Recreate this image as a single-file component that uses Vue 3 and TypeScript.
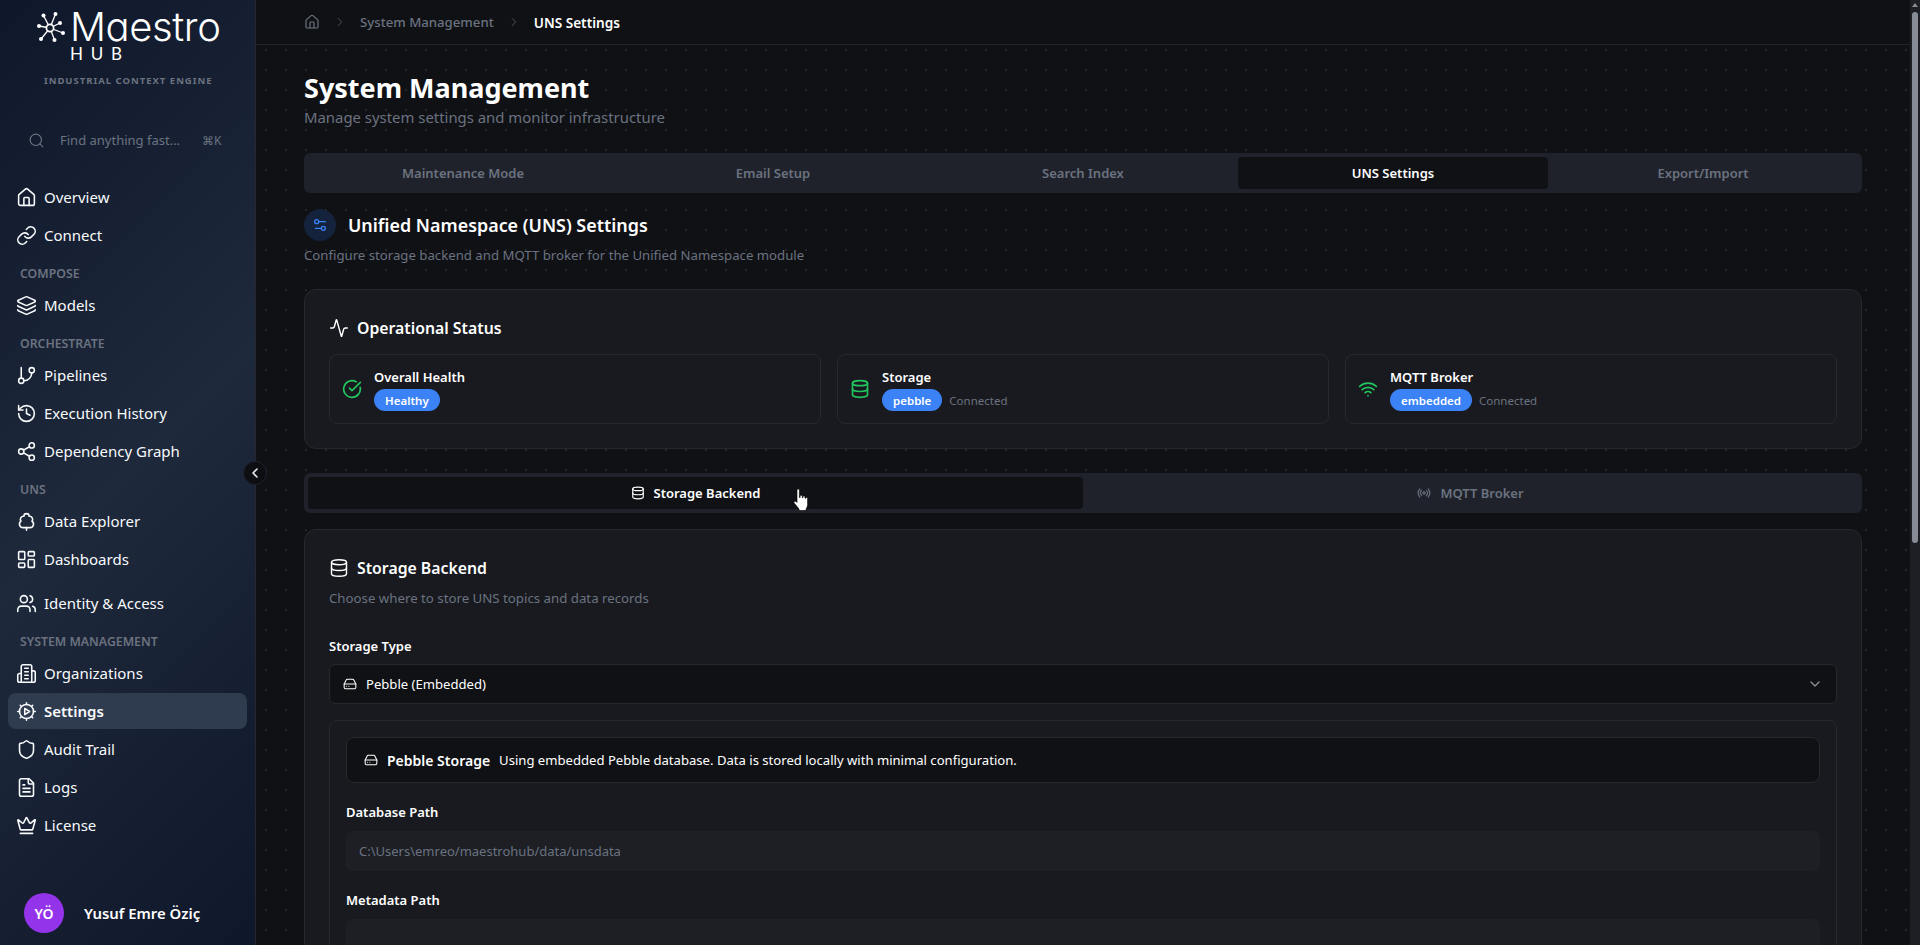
<script setup lang="ts">
interface NavItem {
  label?: string
  section?: string
  icon?: string
  active?: boolean
  spaced?: boolean
}

// lucide style icon bodies, keyed by name
const icons: Record<string, string> = {
  house:
    '<path d="M15 21v-8a1 1 0 0 0-1-1h-4a1 1 0 0 0-1 1v8"/><path d="M3 10a2 2 0 0 1 .709-1.528l7-5.999a2 2 0 0 1 2.582 0l7 5.999A2 2 0 0 1 21 10v9a2 2 0 0 1-2 2H5a2 2 0 0 1-2-2z"/>',
  link: '<path d="M10 13a5 5 0 0 0 7.54.54l3-3a5 5 0 0 0-7.07-7.07l-1.72 1.71"/><path d="M14 11a5 5 0 0 0-7.54-.54l-3 3a5 5 0 0 0 7.07 7.07l1.71-1.71"/>',
  layers:
    '<path d="M12.83 2.18a2 2 0 0 0-1.66 0L2.6 6.08a1 1 0 0 0 0 1.83l8.58 3.91a2 2 0 0 0 1.66 0l8.58-3.9a1 1 0 0 0 0-1.83z"/><path d="M2 12a1 1 0 0 0 .58.91l8.6 3.91a2 2 0 0 0 1.65 0l8.58-3.9A1 1 0 0 0 22 12"/><path d="M2 17a1 1 0 0 0 .58.91l8.6 3.91a2 2 0 0 0 1.65 0l8.58-3.9A1 1 0 0 0 22 17"/>',
  branch:
    '<line x1="6" x2="6" y1="3" y2="15"/><circle cx="18" cy="6" r="3"/><circle cx="6" cy="18" r="3"/><path d="M18 9a9 9 0 0 1-9 9"/>',
  history: '<path d="M3 12a9 9 0 1 0 9-9 9.75 9.75 0 0 0-6.74 2.74L3 8"/><path d="M3 3v5h5"/><path d="M12 7v5l4 2"/>',
  share:
    '<circle cx="18" cy="5" r="3"/><circle cx="6" cy="12" r="3"/><circle cx="18" cy="19" r="3"/><line x1="8.59" x2="15.42" y1="13.51" y2="17.49"/><line x1="15.41" x2="8.59" y1="6.51" y2="10.49"/>',
  tree: '<path d="M8 19a4 4 0 0 1-2.24-7.32A3.5 3.5 0 0 1 9 6.03V6a3 3 0 1 1 6 0v.04a3.5 3.5 0 0 1 3.24 5.65A4 4 0 0 1 16 19Z"/><path d="M12 19v3"/>',
  dashboard:
    '<rect width="7" height="9" x="3" y="3" rx="1"/><rect width="7" height="5" x="14" y="3" rx="1"/><rect width="7" height="9" x="14" y="12" rx="1"/><rect width="7" height="5" x="3" y="16" rx="1"/>',
  users:
    '<path d="M16 21v-2a4 4 0 0 0-4-4H6a4 4 0 0 0-4 4v2"/><path d="M16 3.128a4 4 0 0 1 0 7.744"/><path d="M22 21v-2a4 4 0 0 0-3-3.87"/><circle cx="9" cy="7" r="4"/>',
  building:
    '<path d="M6 22V4a2 2 0 0 1 2-2h8a2 2 0 0 1 2 2v18Z"/><path d="M6 12H4a2 2 0 0 0-2 2v6a2 2 0 0 0 2 2h2"/><path d="M18 9h2a2 2 0 0 1 2 2v9a2 2 0 0 1-2 2h-2"/><path d="M10 6h4"/><path d="M10 10h4"/><path d="M10 14h4"/><path d="M10 18h4"/>',
  gear: '<circle cx="12" cy="12" r="8"/><path d="M12 2v2"/><path d="M12 20v2"/><path d="M2 12h2"/><path d="M20 12h2"/><path d="m4.9 4.9 1.4 1.4"/><path d="m17.7 17.7 1.4 1.4"/><path d="m4.9 19.1 1.4-1.4"/><path d="m17.7 6.3 1.4-1.4"/><path d="M10 8.5 15.5 12 10 15.5z"/>',
  shield:
    '<path d="M20 13c0 5-3.5 7.5-7.66 8.95a1 1 0 0 1-.67-.01C7.5 20.5 4 18 4 13V6a1 1 0 0 1 1-1c2 0 4.5-1.2 6.24-2.72a1.17 1.17 0 0 1 1.52 0C14.51 3.81 17 5 19 5a1 1 0 0 1 1 1z"/>',
  file: '<path d="M15 2H6a2 2 0 0 0-2 2v16a2 2 0 0 0 2 2h12a2 2 0 0 0 2-2V7Z"/><path d="M14 2v4a2 2 0 0 0 2 2h4"/><path d="M10 9H8"/><path d="M16 13H8"/><path d="M16 17H8"/>',
  crown:
    '<path d="M11.562 3.266a.5.5 0 0 1 .876 0L15.39 8.87a1 1 0 0 0 1.516.294L21.183 5.5a.5.5 0 0 1 .798.519l-2.834 10.246a1 1 0 0 1-.956.734H5.81a1 1 0 0 1-.957-.734L2.02 6.02a.5.5 0 0 1 .798-.519l4.276 3.664a1 1 0 0 0 1.516-.294z"/><path d="M5 21h14"/>',
  search: '<circle cx="11" cy="11" r="8"/><path d="m21 21-4.3-4.3"/>',
  chevronRight: '<path d="m9 18 6-6-6-6"/>',
  chevronLeft: '<path d="m15 18-6-6 6-6"/>',
  chevronDown: '<path d="m6 9 6 6 6-6"/>',
  sliders: '<path d="M20 7h-9"/><path d="M14 17H5"/><circle cx="17" cy="17" r="3"/><circle cx="7" cy="7" r="3"/>',
  activity:
    '<path d="M22 12h-2.48a2 2 0 0 0-1.93 1.46l-2.35 8.36a.25.25 0 0 1-.48 0L9.24 2.18a.25.25 0 0 0-.48 0l-2.35 8.36A2 2 0 0 1 4.49 12H2"/>',
  check: '<path d="M21.801 10A10 10 0 1 1 17 3.335"/><path d="m9 11 3 3L22 4"/>',
  database: '<ellipse cx="12" cy="5" rx="9" ry="3"/><path d="M3 5V19A9 3 0 0 0 21 19V5"/><path d="M3 12A9 3 0 0 0 21 12"/>',
  wifi: '<path d="M12 20h.01"/><path d="M2 8.82a15 15 0 0 1 20 0"/><path d="M5 12.859a10 10 0 0 1 14 0"/><path d="M8.5 16.429a5 5 0 0 1 7 0"/>',
  radio:
    '<path d="M4.9 19.1C1 15.2 1 8.8 4.9 4.9"/><path d="M7.8 16.2c-2.3-2.3-2.3-6.1 0-8.5"/><circle cx="12" cy="12" r="2"/><path d="M16.2 7.8c2.3 2.3 2.3 6.1 0 8.5"/><path d="M19.1 4.9C23 8.8 23 15.1 19.1 19"/>',
  drive:
    '<line x1="22" x2="2" y1="12" y2="12"/><path d="M5.45 5.11 2 12v6a2 2 0 0 0 2 2h16a2 2 0 0 0 2-2v-6l-3.45-6.89A2 2 0 0 0 16.76 4H7.24a2 2 0 0 0-1.79 1.11z"/><line x1="6" x2="6.01" y1="16" y2="16"/><line x1="10" x2="10.01" y1="16" y2="16"/>',
}

const navItems: NavItem[] = [
  { label: 'Overview', icon: 'house' },
  { label: 'Connect', icon: 'link' },
  { section: 'COMPOSE' },
  { label: 'Models', icon: 'layers' },
  { section: 'ORCHESTRATE' },
  { label: 'Pipelines', icon: 'branch' },
  { label: 'Execution History', icon: 'history' },
  { label: 'Dependency Graph', icon: 'share' },
  { section: 'UNS' },
  { label: 'Data Explorer', icon: 'tree' },
  { label: 'Dashboards', icon: 'dashboard' },
  { label: 'Identity & Access', icon: 'users', spaced: true },
  { section: 'SYSTEM MANAGEMENT' },
  { label: 'Organizations', icon: 'building' },
  { label: 'Settings', icon: 'gear', active: true },
  { label: 'Audit Trail', icon: 'shield' },
  { label: 'Logs', icon: 'file' },
  { label: 'License', icon: 'crown' },
]

const pageTabs = ['Maintenance Mode', 'Email Setup', 'Search Index', 'UNS Settings', 'Export/Import']

const statusCards = [
  { title: 'Overall Health', icon: 'check', badge: 'Healthy', note: '' },
  { title: 'Storage', icon: 'database', badge: 'pebble', note: 'Connected' },
  { title: 'MQTT Broker', icon: 'wifi', badge: 'embedded', note: 'Connected' },
]

// spokes of the logo mark, from the hub out to each node
const logoNodes = [
  [6.5, 3.5],
  [18.5, 2],
  [23, 11],
  [26, 21],
  [17.5, 28],
  [4, 27],
  [2, 14],
]
</script>

<template>
  <div class="app">
    <aside class="sidebar">
      <div class="brand">
        <div class="logo">
          <svg class="logo-mark" viewBox="0 0 28 30" fill="#fff" stroke="#fff" stroke-width="1.3">
            <line v-for="(n, i) in logoNodes" :key="i" x1="13" y1="16" :x2="n[0]" :y2="n[1]" />
            <circle cx="13" cy="16" r="3.6" fill="#141c2e" stroke-width="1.7" />
            <circle v-for="(n, i) in logoNodes" :key="'n' + i" :cx="n[0]" :cy="n[1]" r="2" stroke="none" />
          </svg>
          <div class="logo-words">
            <span class="logo-name">Maestro</span>
            <span class="logo-hub">HUB</span>
          </div>
        </div>
        <div class="tagline">INDUSTRIAL CONTEXT ENGINE</div>
      </div>

      <div class="search">
        <svg class="ico search-ico" viewBox="0 0 24 24" v-html="icons.search"></svg>
        <span class="search-text">Find anything fast...</span>
        <span class="search-key">⌘K</span>
      </div>

      <nav class="nav">
        <template v-for="item in navItems" :key="item.label || item.section">
          <div v-if="item.section" class="nav-section">{{ item.section }}</div>
          <div v-else class="nav-item" :class="{ active: item.active, spaced: item.spaced }">
            <svg class="ico nav-ico" viewBox="0 0 24 24" v-html="icons[item.icon!]"></svg>
            <span>{{ item.label }}</span>
          </div>
        </template>
      </nav>

      <div class="user">
        <div class="avatar">YÖ</div>
        <span class="user-name">Yusuf Emre Öziç</span>
      </div>

      <button class="collapse">
        <svg class="ico" viewBox="0 0 24 24" v-html="icons.chevronLeft"></svg>
      </button>
    </aside>

    <div class="main">
      <header class="topbar">
        <svg class="ico crumb-home" viewBox="0 0 24 24" v-html="icons.house"></svg>
        <svg class="ico crumb-sep" viewBox="0 0 24 24" v-html="icons.chevronRight"></svg>
        <span class="crumb">System Management</span>
        <svg class="ico crumb-sep" viewBox="0 0 24 24" v-html="icons.chevronRight"></svg>
        <span class="crumb current">UNS Settings</span>
      </header>

      <main class="content">
        <h1 class="page-title">System Management</h1>
        <p class="page-sub">Manage system settings and monitor infrastructure</p>

        <div class="tabs page-tabs">
          <div v-for="tab in pageTabs" :key="tab" class="tab" :class="{ active: tab === 'UNS Settings' }">{{ tab }}</div>
        </div>

        <div class="section-head">
          <span class="section-badge">
            <svg class="ico" viewBox="0 0 24 24" v-html="icons.sliders"></svg>
          </span>
          <h2 class="section-title">Unified Namespace (UNS) Settings</h2>
        </div>
        <p class="section-sub">Configure storage backend and MQTT broker for the Unified Namespace module</p>

        <section class="card status-card">
          <h3 class="card-title">
            <svg class="ico title-ico" viewBox="0 0 24 24" v-html="icons.activity"></svg>
            Operational Status
          </h3>
          <div class="status-grid">
            <div v-for="card in statusCards" :key="card.title" class="status-item">
              <svg class="ico status-ico" viewBox="0 0 24 24" v-html="icons[card.icon]"></svg>
              <div>
                <div class="status-title">{{ card.title }}</div>
                <div class="status-line">
                  <span class="badge">{{ card.badge }}</span>
                  <span v-if="card.note" class="status-note">{{ card.note }}</span>
                </div>
              </div>
            </div>
          </div>
        </section>

        <div class="tabs sub-tabs">
          <div class="tab active">
            <svg class="ico tab-ico" viewBox="0 0 24 24" v-html="icons.database"></svg>
            Storage Backend
          </div>
          <div class="tab">
            <svg class="ico tab-ico" viewBox="0 0 24 24" v-html="icons.radio"></svg>
            MQTT Broker
          </div>
        </div>

        <section class="card storage-card">
          <h3 class="card-title">
            <svg class="ico title-ico" viewBox="0 0 24 24" v-html="icons.database"></svg>
            Storage Backend
          </h3>
          <p class="card-sub">Choose where to store UNS topics and data records</p>

          <label class="field-label">Storage Type</label>
          <div class="select">
            <svg class="ico select-ico" viewBox="0 0 24 24" v-html="icons.drive"></svg>
            <span>Pebble (Embedded)</span>
            <svg class="ico select-arrow" viewBox="0 0 24 24" v-html="icons.chevronDown"></svg>
          </div>

          <div class="panel">
            <div class="info">
              <svg class="ico select-ico" viewBox="0 0 24 24" v-html="icons.drive"></svg>
              <strong class="info-title">Pebble Storage</strong>
              <span class="info-text">Using embedded Pebble database. Data is stored locally with minimal configuration.</span>
            </div>

            <label class="field-label">Database Path</label>
            <div class="input">C:\Users\emreo/maestrohub/data/unsdata</div>

            <label class="field-label">Metadata Path</label>
            <div class="input"></div>
          </div>
        </section>
      </main>

      <!-- mouse pointer caught in the capture -->
      <svg class="pointer" viewBox="2 1 16 23">
        <path
          d="M5.5 2.2c0-1.5 2.4-1.5 2.4 0v7.3l.7.1V8.2c0-1.3 2.2-1.3 2.2 0v1.6l.6.1v-1c0-1.3 2.1-1.3 2.1 0v1.3l.6.1c0-1.1 2-1.1 2 .2v6.2c0 2-1 3-1.6 4.6v1.2H7.6v-1.2c-1.2-2-3-3.6-4.9-6.2-.9-1.3.6-2.6 1.8-1.6l1 1z"
          fill="#fff"
          stroke="#000"
          stroke-width="0.6"
          stroke-linejoin="round"
        />
      </svg>
    </div>

    <!-- headless capture hides native scrollbars, so this one is drawn -->
    <div class="scrollbar">
      <span class="scroll-arrow"></span>
      <span class="scroll-thumb"></span>
    </div>
  </div>
</template>

<style>
html,
body {
  margin: 0;
  height: 100%;
  overflow: hidden;
  background: #101115;
}
</style>

<style scoped>
* {
  box-sizing: border-box;
}

.app {
  display: flex;
  height: 945px;
  overflow: hidden;
  font-family: 'Noto Sans', 'Liberation Sans', sans-serif;
  color: #fff;
  background: #101115;
}

.ico {
  fill: none;
  stroke: currentColor;
  stroke-width: 2;
  stroke-linecap: round;
  stroke-linejoin: round;
  flex: none;
}

/* sidebar */
.sidebar {
  position: relative;
  width: 256px;
  flex: none;
  display: flex;
  flex-direction: column;
  background: linear-gradient(135deg, #0f172a 0%, #1e293b 50%, #0f172a 100%);
  border-right: 1px solid #26282e;
  z-index: 2;
}

.brand {
  height: 96px;
  padding: 12px 0 0 37px;
}

.logo {
  display: flex;
  align-items: flex-start;
}

.logo-mark {
  width: 28px;
  height: 30px;
  margin-right: 5px;
}

.logo-words {
  display: flex;
  flex-direction: column;
}

.logo-name {
  font-family: Inter, Lato, 'Noto Sans', sans-serif;
  font-feature-settings: 'cv11';
  font-size: 40px;
  font-weight: 300;
  line-height: 29px;
  height: 32px;
  letter-spacing: -0.4px;
}

.logo-hub {
  font-family: Lato, 'Noto Sans', sans-serif;
  font-size: 17px;
  font-weight: 400;
  line-height: 16px;
  letter-spacing: 7.8px;
  margin-top: 2px;
}

.tagline {
  margin: 12px 0 0 7px;
  font-size: 9.5px;
  font-weight: 700;
  letter-spacing: 1px;
  color: #6b7280;
  white-space: nowrap;
}

.search {
  display: flex;
  align-items: center;
  height: 40px;
  margin: 24px 0 19px 28px;
  color: #6b7280;
  font-size: 13px;
}

.search-ico {
  width: 17px;
  height: 17px;
  stroke-width: 1.6;
}

.search-text {
  margin-left: 15px;
  width: 142px;
}

.search-key {
  font-size: 12px;
}

.nav {
  display: flex;
  flex-direction: column;
  gap: 2px;
  padding: 0 8px;
}

.nav-section {
  height: 30px;
  padding: 0 12px;
  line-height: 37px;
  font-size: 12.3px;
  font-weight: 600;
  color: #6b7280;
  white-space: nowrap;
}

.nav-item {
  display: flex;
  align-items: center;
  height: 36px;
  padding-left: 7.5px;
  border-radius: 8px;
  font-size: 15px;
  color: #f8fafc;
}

.nav-item.spaced {
  margin-top: 6px;
}

.nav-item.active {
  background: #2f3b4e;
  font-weight: 600;
}

.nav-ico {
  width: 21px;
  height: 21px;
  margin-right: 7.5px;
  stroke-width: 1.8;
}

.user {
  position: absolute;
  left: 24px;
  top: 893px;
  display: flex;
  align-items: center;
}

.avatar {
  width: 40px;
  height: 40px;
  border-radius: 50%;
  background: #9333ea;
  display: flex;
  align-items: center;
  justify-content: center;
  font-size: 14px;
  font-weight: 600;
}

.user-name {
  margin-left: 20px;
  font-size: 14.9px;
  font-weight: 600;
}

.collapse {
  position: absolute;
  top: 461px;
  right: -12px;
  width: 24px;
  height: 24px;
  padding: 0;
  border: 1px solid #1d2230;
  border-radius: 50%;
  background: #0d0e12;
  color: #e5e7eb;
  display: flex;
  align-items: center;
  justify-content: center;
}

.collapse .ico {
  width: 16px;
  height: 16px;
  stroke-width: 2.4;
}

/* main column */
.main {
  position: relative;
  flex: 1;
  min-width: 0;
  height: 945px;
  overflow: hidden;
  background-color: #101115;
}

.scrollbar {
  width: 10px;
  flex: none;
  display: flex;
  flex-direction: column;
  align-items: center;
  background: #1d1f25;
}

.scroll-arrow {
  margin-top: 3px;
  width: 0;
  height: 0;
  border-left: 3.5px solid transparent;
  border-right: 3.5px solid transparent;
  border-bottom: 4px solid #868b96;
}

.scroll-thumb {
  width: 6px;
  height: 531px;
  margin-top: 5px;
  border-radius: 3px;
  background: #868b96;
}

.topbar {
  display: flex;
  align-items: center;
  height: 45px;
  padding-left: 48px;
  border-bottom: 1px solid #22242a;
  background: #101115;
  font-size: 13.2px;
}

.crumb-home {
  width: 16px;
  height: 16px;
  color: #6b7280;
  stroke-width: 1.8;
}

.crumb-sep {
  width: 14px;
  height: 14px;
  margin: 0 13px;
  color: #4b5563;
  stroke-width: 1.6;
}

.crumb {
  font-weight: 500;
  color: #6b7280;
}

.crumb.current {
  font-size: 13.6px;
  font-weight: 600;
  color: #fff;
}

.content {
  min-height: 900px;
  padding: 24px 48px 0;
  background-image: radial-gradient(circle, #232529 1px, transparent 1.1px);
  background-size: 20px 20px;
  background-position: 0 -5px;
}

.page-title {
  margin: 0;
  font-size: 27px;
  line-height: 38px;
  font-weight: 700;
}

.page-sub {
  margin: 0;
  font-size: 14.9px;
  line-height: 20px;
  color: #6b7280;
}

.tabs {
  display: grid;
  height: 40px;
  padding: 4px;
  border-radius: 6px;
  background: #1f222a;
}

.page-tabs {
  grid-template-columns: repeat(5, 1fr);
  margin-top: 26px;
}

.sub-tabs {
  grid-template-columns: repeat(2, 1fr);
  margin-top: 24px;
}

.tab {
  display: flex;
  align-items: center;
  justify-content: center;
  border-radius: 4px;
  font-size: 13px;
  font-weight: 600;
  color: #6b7280;
}

.tab.active {
  background: #101115;
  color: #fff;
}

.tab-ico {
  width: 14px;
  height: 14px;
  margin-right: 9px;
}

.section-head {
  display: flex;
  align-items: center;
  margin-top: 16px;
}

.section-badge {
  display: flex;
  align-items: center;
  justify-content: center;
  width: 32px;
  height: 32px;
  border-radius: 50%;
  background: #14233b;
  color: #3b82f6;
}

.section-badge .ico {
  width: 16px;
  height: 16px;
}

.section-title {
  margin: 0 0 0 12px;
  font-size: 17.9px;
  line-height: 28px;
  font-weight: 600;
}

.section-sub {
  margin: 4px 0 0;
  font-size: 13.2px;
  line-height: 20px;
  color: #6b7280;
}

.card {
  border: 1px solid #26282e;
  border-radius: 12px;
  background: #181a1f;
  padding: 24px;
}

.status-card {
  margin-top: 24px;
  height: 160px;
}

.card-title {
  display: flex;
  align-items: center;
  margin: 0;
  font-size: 15.8px;
  line-height: 28px;
  font-weight: 600;
}

.title-ico {
  width: 20px;
  height: 20px;
  margin-right: 8px;
  stroke-width: 1.7;
}

.status-grid {
  display: grid;
  grid-template-columns: repeat(3, 1fr);
  gap: 16px;
  margin-top: 12px;
}

.status-item {
  display: flex;
  align-items: center;
  height: 70px;
  padding: 0 12px;
  border: 1px solid #26282e;
  border-radius: 8px;
}

.status-ico {
  width: 20px;
  height: 20px;
  margin-right: 12px;
  color: #22c55e;
}

.status-title {
  font-size: 13px;
  line-height: 20px;
  font-weight: 600;
}

.status-line {
  display: flex;
  align-items: center;
  margin-top: 2px;
}

.badge {
  display: inline-flex;
  align-items: center;
  height: 22px;
  padding: 0 11px;
  border-radius: 11px;
  background: #3b82f6;
  font-size: 11.5px;
  font-weight: 600;
}

.status-note {
  margin-left: 7px;
  font-size: 11.5px;
  color: #6b7280;
}

.storage-card {
  margin-top: 16px;
  padding-bottom: 60px;
}

.card-sub {
  margin: 6px 0 0;
  font-size: 13.25px;
  line-height: 20px;
  color: #6b7280;
}

.field-label {
  display: block;
  font-size: 13px;
  line-height: 20px;
  font-weight: 600;
}

.storage-card > .field-label {
  margin-top: 28px;
}

.select {
  display: flex;
  align-items: center;
  height: 40px;
  margin-top: 8px;
  padding: 0 13px;
  border: 1px solid #26282e;
  border-radius: 6px;
  background: #101115;
  font-size: 13.1px;
}

.select-ico {
  width: 14px;
  height: 14px;
  margin-right: 9px;
  stroke-width: 1.8;
}

.select-arrow {
  width: 16px;
  height: 16px;
  margin-left: auto;
  color: #8b8f98;
}

.panel {
  margin-top: 16px;
  padding: 16px;
  border: 1px solid #26282e;
  border-radius: 8px;
}

.info {
  display: flex;
  align-items: center;
  height: 46px;
  padding: 0 17px;
  border: 1px solid #26282e;
  border-radius: 8px;
  background: #101115;
}

.info-title {
  font-size: 14px;
  font-weight: 600;
}

.info-text {
  margin-left: 9px;
  font-size: 13.1px;
}

.panel .field-label {
  margin-top: 19px;
}

.input {
  height: 40px;
  margin-top: 9px;
  padding: 0 13px;
  display: flex;
  align-items: center;
  border-radius: 6px;
  background: #1d1f25;
  font-size: 13px;
  color: #6b7280;
}

.pointer {
  position: absolute;
  left: 537px;
  top: 489px;
  width: 17px;
  height: 23px;
}
</style>
